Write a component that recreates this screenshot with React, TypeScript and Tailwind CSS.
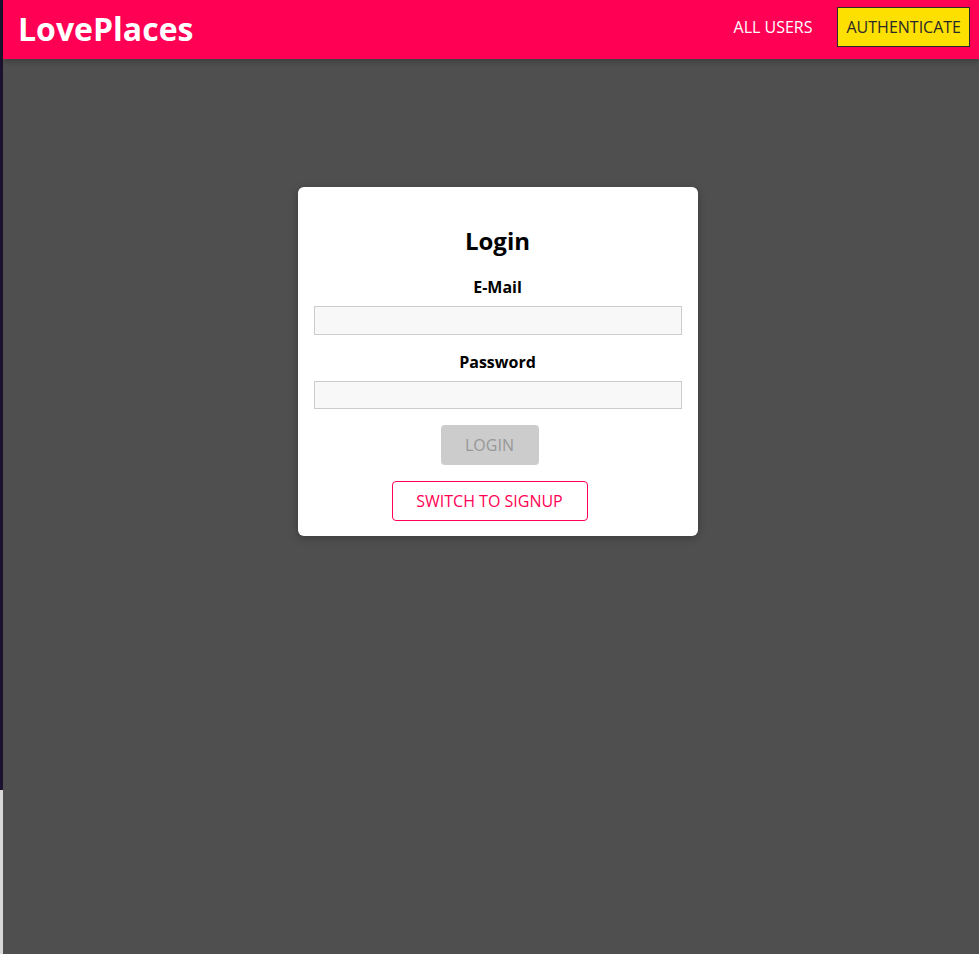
import { useState } from 'react';

const NAV_LINKS = [
  { label: 'ALL USERS', href: '/' },
  { label: 'AUTHENTICATE', href: '/auth', active: true },
];

export default function App() {
  const [email, setEmail] = useState('');
  const [password, setPassword] = useState('');
  const valid = email.includes('@') && password.length >= 6;

  return (
    <div className="flex min-h-[954px] bg-[#4f4f4f]" style={{ fontFamily: '"Open Sans", sans-serif' }}>
      {/* window edge */}
      <div className="flex w-[3px] shrink-0 flex-col">
        <div className="h-[790px] bg-[#1c1230]" />
        <div className="flex-1 bg-[#d8d8d8]" />
      </div>

      <div className="flex-1">
        <header className="flex h-[59px] items-center justify-between bg-[#ff0055] pl-[15px] pr-[9px] shadow-[0_2px_6px_rgba(0,0,0,0.26)]">
          <h1 className="mt-[-2px] text-[32px] font-bold leading-none text-white">LovePlaces</h1>
          <nav className="flex items-center gap-[25px]">
            {NAV_LINKS.map((link) =>
              link.active ? (
                <a
                  key={link.href}
                  href={link.href}
                  className="mt-[-5px] flex h-[40px] items-center border border-[#292929] bg-[#fde000] px-[8px] text-[16px] text-[#292929]"
                >
                  {link.label}
                </a>
              ) : (
                <a key={link.href} href={link.href} className="mt-[-5px] text-[16px] text-white">
                  {link.label}
                </a>
              )
            )}
          </nav>
        </header>

        <main className="flex justify-center pt-[128px] pl-[13px]">
          <div className="w-[400px] rounded-[6px] bg-white px-[16px] pt-[38px] pb-[15px] shadow-[0_2px_8px_rgba(0,0,0,0.26)]">
            <h2 className="text-center text-[24px] font-bold leading-[32px] text-black">Login</h2>
            <form onSubmit={(e) => e.preventDefault()} className="mt-[19px] flex flex-col items-center">
              <label className="text-[16px] font-bold leading-[22px] text-black">E-Mail</label>
              <input
                value={email}
                onChange={(e) => setEmail(e.target.value)}
                className="mt-[8px] h-[29px] w-full border border-[#ccc] bg-[#f8f8f8] px-1 outline-none"
              />
              <label className="mt-[16px] text-[16px] font-bold leading-[22px] text-black">Password</label>
              <input
                type="password"
                value={password}
                onChange={(e) => setPassword(e.target.value)}
                className="mt-[8px] h-[28px] w-full border border-[#ccc] bg-[#f8f8f8] px-1 outline-none"
              />
              <button
                disabled={!valid}
                className="mt-[16px] mr-[16px] h-[40px] w-[98px] rounded-[4px] bg-[#ccc] text-[16px] text-[#979797]"
              >
                LOGIN
              </button>
              <button
                type="button"
                className="mt-[16px] mr-[16px] h-[40px] w-[196px] rounded-[4px] border border-[#ff0055] bg-white text-[16px] text-[#ff0055]"
              >
                SWITCH TO SIGNUP
              </button>
            </form>
          </div>
        </main>
      </div>
    </div>
  );
}
